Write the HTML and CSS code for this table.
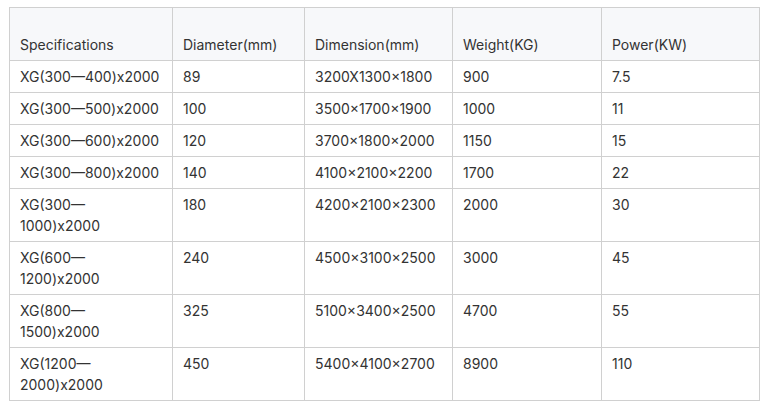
FILE: index.html
```html
<!DOCTYPE html>
<html>
<head>
<meta charset="utf-8">
<link rel="stylesheet" href="styles.css">
</head>
<body>
<div class="wrap">
<table class="spec">
<colgroup>
<col class="c1"><col class="c2"><col class="c3"><col class="c4"><col class="c5">
</colgroup>
<thead>
<tr><th>Specifications</th><th>Diameter(mm)</th><th>Dimension(mm)</th><th>Weight(KG)</th><th>Power(KW)</th></tr>
</thead>
<tbody>
<tr><td>XG(300—400)x2000</td><td>89</td><td>3200X1300×1800</td><td>900</td><td>7.5</td></tr>
<tr><td>XG(300—500)x2000</td><td>100</td><td>3500×1700×1900</td><td>1000</td><td>11</td></tr>
<tr><td>XG(300—600)x2000</td><td>120</td><td>3700×1800×2000</td><td>1150</td><td>15</td></tr>
<tr><td>XG(300—800)x2000</td><td>140</td><td>4100×2100×2200</td><td>1700</td><td>22</td></tr>
<tr><td>XG(300—1000)x2000</td><td>180</td><td>4200×2100×2300</td><td>2000</td><td>30</td></tr>
<tr><td>XG(600—1200)x2000</td><td>240</td><td>4500×3100×2500</td><td>3000</td><td>45</td></tr>
<tr><td>XG(800—1500)x2000</td><td>325</td><td>5100×3400×2500</td><td>4700</td><td>55</td></tr>
<tr><td>XG(1200—2000)x2000</td><td>450</td><td>5400×4100×2700</td><td>8900</td><td>110</td></tr>
</tbody>
</table>
</div>
</body>
</html>
```
FILE: styles.css
```css
html, body {
  margin: 0;
  background: #fff;
}
.wrap {
  padding: 7px 0 0 9px;
}
.spec {
  width: 750px;
  table-layout: fixed;
  border-collapse: collapse;
  font-family: Inter, "Noto Sans", sans-serif;
  font-size: 14px;
  line-height: 21px;
  color: #333;
}
.c1 { width: 163px; }
.c2 { width: 132px; }
.c3 { width: 148px; }
.c4 { width: 149px; }
.c5 { width: 158px; }
.spec th, .spec td {
  border: 1px solid #d0d0d0;
  padding: 5px 10px;
  text-align: left;
  font-weight: normal;
  vertical-align: top;
  word-wrap: break-word;
}
.spec th {
  background: #f7f8fa;
  height: 42px;
  vertical-align: bottom;
}
```
